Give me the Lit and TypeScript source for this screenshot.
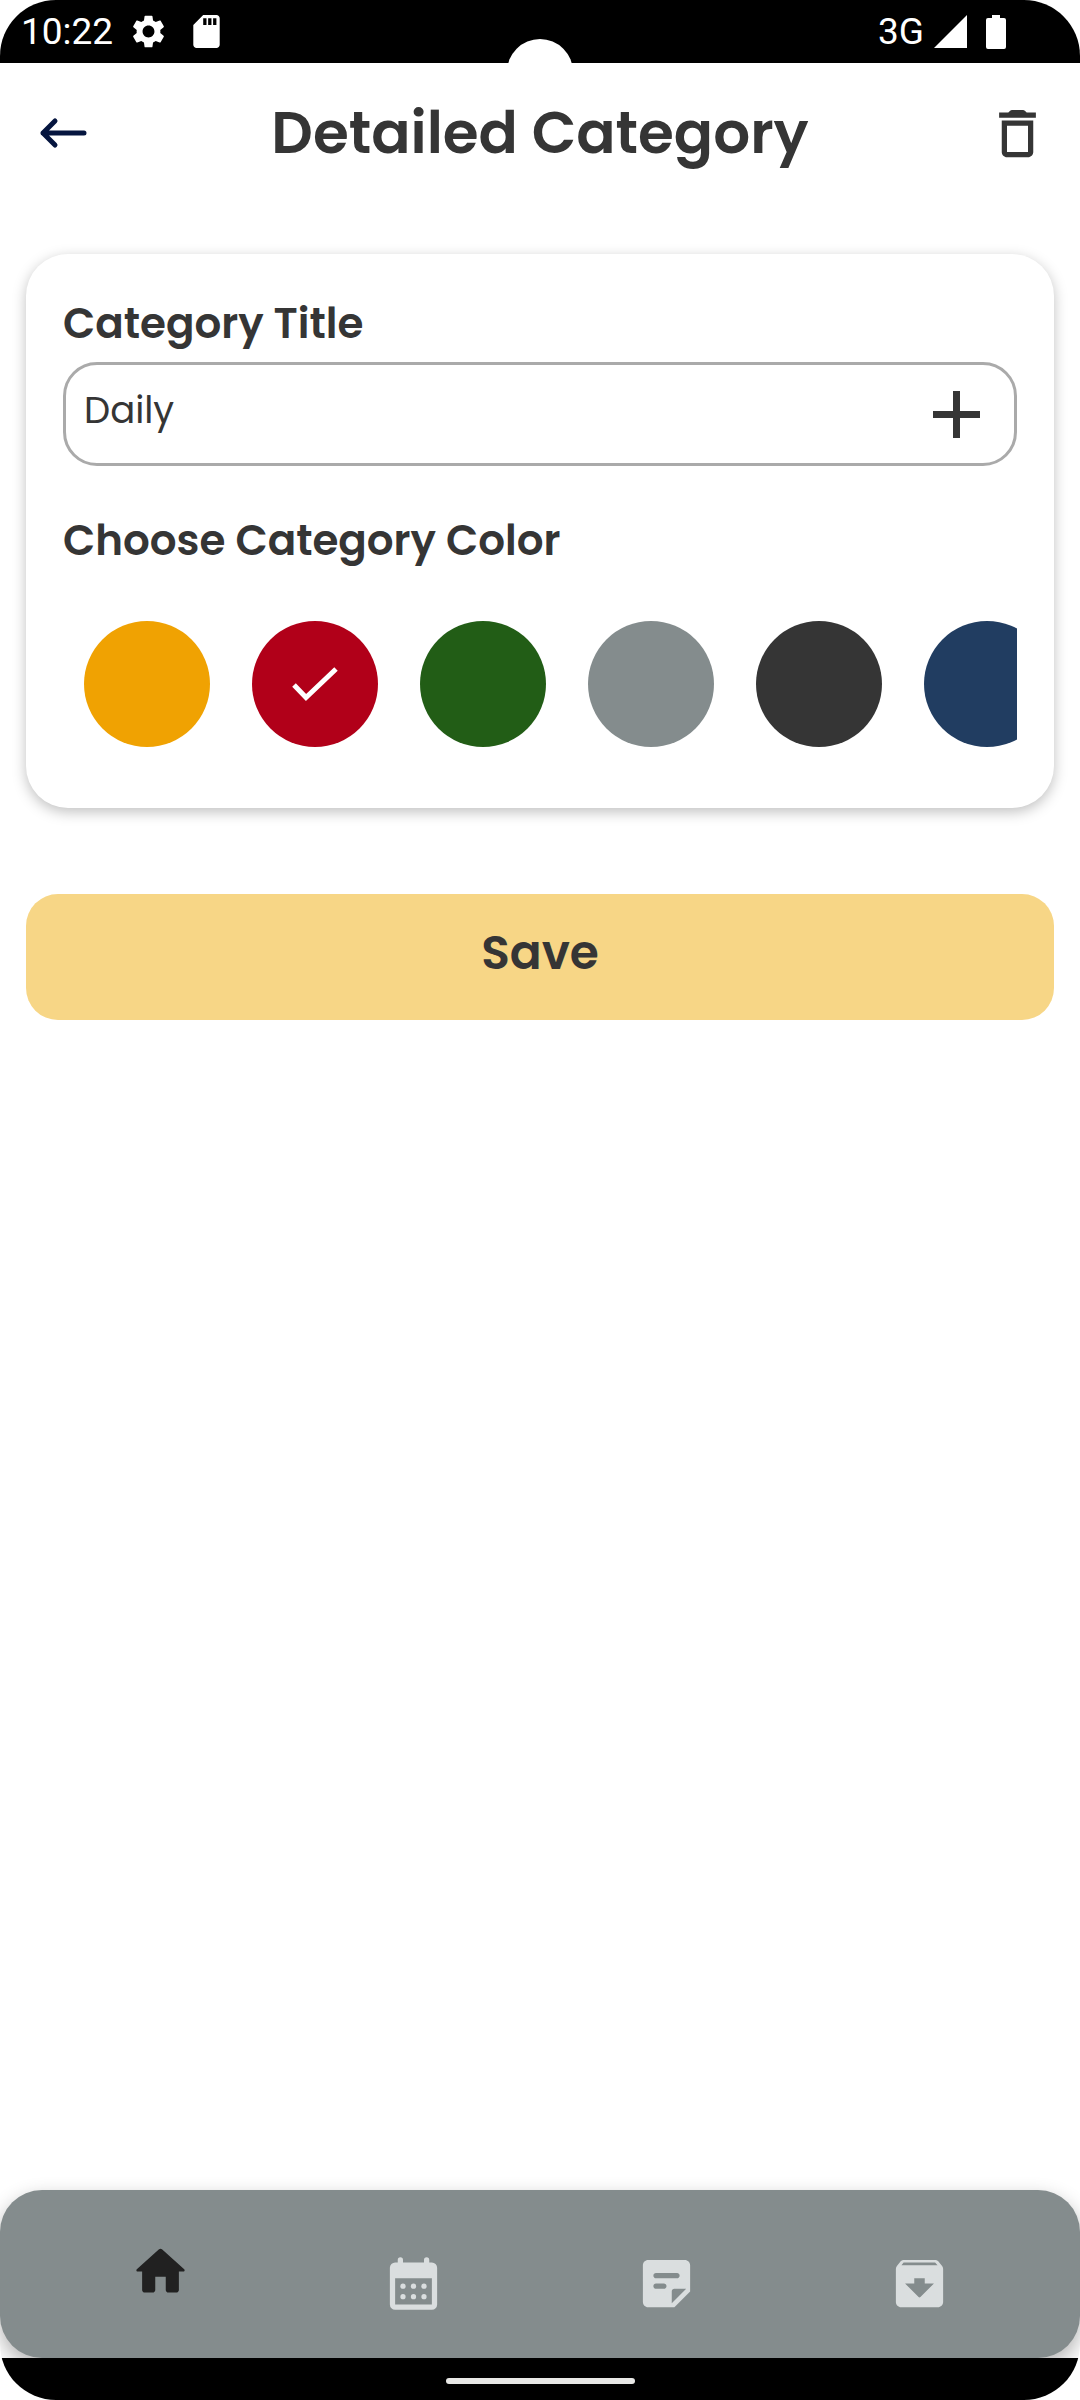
import { LitElement, html, css, svg } from "lit";
import { customElement, state } from "lit/decorators.js";
import { classMap } from "lit/directives/class-map.js";
import { styleMap } from "lit/directives/style-map.js";

interface Swatch {
  name: string;
  color: string;
}

interface Tab {
  name: string;
  icon: unknown;
}

const SWATCHES: Swatch[] = [
  { name: "Orange", color: "#f0a202" },
  { name: "Red", color: "#b10019" },
  { name: "Green", color: "#225d16" },
  { name: "Grey", color: "#848c8d" },
  { name: "Charcoal", color: "#353535" },
  { name: "Navy", color: "#213d61" },
];

const TABS: Tab[] = [
  {
    name: "Home",
    icon: svg`<path d="M10 19v-5h4v5c0 .55.45 1 1 1h3c.55 0 1-.45 1-1v-7h1.7c.46 0 .68-.57.33-.87L12.67 3.6c-.38-.34-.96-.34-1.34 0l-8.36 7.53c-.34.3-.13.87.33.87H5v7c0 .55.45 1 1 1h3c.55 0 1-.45 1-1z"/>`,
  },
  {
    name: "Calendar",
    icon: svg`<path fill-rule="evenodd" d="M6 4V3a1 1 0 0 1 2 0v1h8V3a1 1 0 0 1 2 0v1h1a2 2 0 0 1 2 2v14a2 2 0 0 1-2 2H5a2 2 0 0 1-2-2V6a2 2 0 0 1 2-2zM5 10v10h14V10z"/><circle cx="8" cy="13" r="1"/><circle cx="12" cy="13" r="1"/><circle cx="16" cy="13" r="1"/><circle cx="8" cy="17" r="1"/><circle cx="12" cy="17" r="1"/><circle cx="16" cy="17" r="1"/>`,
  },
  {
    name: "Notes",
    icon: svg`<path d="M19 3H4.99C3.89 3 3 3.9 3 5l.01 14c0 1.1.89 2 1.99 2h10l6-6V5c0-1.1-.9-2-2-2zM8 8h8c.55 0 1 .45 1 1s-.45 1-1 1H8c-.55 0-1-.45-1-1s.45-1 1-1zm3 6H8c-.55 0-1-.45-1-1s.45-1 1-1h3c.55 0 1 .45 1 1s-.45 1-1 1zm3 5.5V15c0-.55.45-1 1-1h4.5L14 19.5z"/>`,
  },
  {
    name: "Archive",
    icon: svg`<path d="M20.54 5.23l-1.39-1.68C18.88 3.21 18.47 3 18 3H6c-.47 0-.88.21-1.16.55L3.46 5.23C3.17 5.57 3 6.02 3 6.5V19c0 1.1.9 2 2 2h14c1.1 0 2-.9 2-2V6.5c0-.48-.17-.93-.46-1.27zm-8.89 11.92L6.5 12H10v-2h4v2h3.5l-5.15 5.15c-.19.19-.51.19-.7 0zM5.12 5l.82-1h12l.93 1H5.12z"/>`,
  },
];

@customElement("status-bar")
export class StatusBar extends LitElement {
  static styles = css`
    :host {
      display: flex;
      justify-content: space-between;
      align-items: center;
      position: relative;
      height: 63px;
      box-sizing: border-box;
      padding: 0 74px 0 21px;
      background: #000;
      color: #fff;
      font: 400 37px/44px Roboto, "Liberation Sans", sans-serif;
    }
    .group {
      display: flex;
      align-items: center;
    }
    .left {
      gap: 19px;
    }
    .right {
      gap: 10px;
    }
    svg {
      display: block;
      fill: #fff;
    }
    .sd,
    .battery {
      margin-left: 9px;
    }
    .camera {
      position: absolute;
      top: 39px;
      left: 50%;
      width: 66px;
      height: 66px;
      margin-left: -33px;
      border-radius: 50%;
      background: #fff;
    }
  `;

  render() {
    return html`
      <div class="group left">
        <span>10:22</span>
        <svg width="33" height="33" viewBox="2 2 20 20" aria-hidden="true">
          <path
            d="M19.14 12.94c.04-.3.06-.61.06-.94 0-.32-.02-.64-.07-.94l2.03-1.58c.18-.14.23-.41.12-.61l-1.92-3.32c-.12-.22-.37-.29-.59-.22l-2.39.96c-.5-.38-1.03-.7-1.62-.94l-.36-2.54c-.04-.24-.24-.41-.48-.41h-3.84c-.24 0-.43.17-.47.41l-.36 2.54c-.59.24-1.13.57-1.62.94l-2.39-.96c-.22-.08-.47 0-.59.22L2.74 8.87c-.12.21-.08.47.12.61l2.03 1.58c-.05.3-.09.63-.09.94s.02.64.07.94l-2.03 1.58c-.18.14-.23.41-.12.61l1.92 3.32c.12.22.37.29.59.22l2.39-.96c.5.38 1.03.7 1.62.94l.36 2.54c.05.24.24.41.48.41h3.84c.24 0 .44-.17.47-.41l.36-2.54c.59-.24 1.13-.56 1.62-.94l2.39.96c.22.08.47 0 .59-.22l1.92-3.32c.12-.22.07-.47-.12-.61l-2.01-1.58zM12 15.6c-1.98 0-3.6-1.62-3.6-3.6s1.62-3.6 3.6-3.6 3.6 1.62 3.6 3.6-1.62 3.6-3.6 3.6z"
          />
        </svg>
        <svg class="sd" width="27" height="33" viewBox="4 2 16 20" aria-hidden="true">
          <path
            d="M18 2h-8L4 8v12c0 1.1.9 2 2 2h12c1.1 0 2-.9 2-2V4c0-1.1-.9-2-2-2zm-6 6h-2V4h2v4zm3 0h-2V4h2v4zm3 0h-2V4h2v4z"
          />
        </svg>
      </div>
      <div class="camera"></div>
      <div class="group right">
        <span>3G</span>
        <svg width="33" height="33" viewBox="0 0 33 33" aria-hidden="true">
          <path d="M0 33 33 0v33z" />
        </svg>
        <svg class="battery" width="20" height="34" viewBox="0 0 20 34" aria-hidden="true">
          <path d="M6 0h8v3h4a2 2 0 0 1 2 2v27a2 2 0 0 1-2 2H2a2 2 0 0 1-2-2V5a2 2 0 0 1 2-2h4z" />
        </svg>
      </div>
    `;
  }
}

@customElement("color-picker")
export class ColorPicker extends LitElement {
  @state() private selected = 1;

  static styles = css`
    :host {
      display: block;
      min-width: 0;
    }
    .row {
      display: flex;
      gap: 42px;
      padding: 0 21px;
      overflow-x: auto;
      scrollbar-width: none;
    }
    .swatch {
      flex: none;
      display: grid;
      place-items: center;
      width: 126px;
      height: 126px;
      border-radius: 50%;
      cursor: pointer;
    }
    .swatch > * {
      grid-area: 1 / 1;
    }
    .radio {
      appearance: none;
      width: 100%;
      height: 100%;
      margin: 0;
      border-radius: 50%;
    }
    .tick {
      fill: none;
      stroke: #fff;
      stroke-width: 5;
      pointer-events: none;
    }
  `;

  render() {
    return html`
      <div class="row" role="radiogroup" aria-label="Choose Category Color">
        ${SWATCHES.map(
          (s, i) => html`
            <label class="swatch" style=${styleMap({ background: s.color })}>
              <input
                class="radio"
                type="radio"
                name="color"
                aria-label=${s.name}
                .checked=${i === this.selected}
                @change=${() => (this.selected = i)}
              />
              ${i === this.selected
                ? html`<svg class="tick" width="48" height="36" viewBox="0 0 48 36" aria-hidden="true">
                    <path d="M3 19 15 31.500 45 3" />
                  </svg>`
                : null}
            </label>
          `
        )}
      </div>
    `;
  }
}

@customElement("tab-bar")
export class TabBar extends LitElement {
  @state() private active = 0;

  static styles = css`
    :host {
      display: block;
    }
    .bar {
      display: flex;
      height: 168px;
      padding: 0 34px;
      border-radius: 42px;
      background: #848c8d;
      box-shadow: 0 8px 20px rgba(0, 0, 0, 0.3);
    }
    .tab {
      flex: 1;
      display: flex;
      align-items: center;
      justify-content: center;
      padding: 18px 0 0;
      border: 0;
      background: none;
      color: #dadedf;
      cursor: pointer;
    }
    .active {
      padding: 0 0 6px;
      color: #212121;
    }
    svg {
      fill: currentColor;
    }
  `;

  render() {
    return html`
      <nav class="bar">
        ${TABS.map(
          (t, i) => html`
            <button
              type="button"
              class=${classMap({ tab: true, active: i === this.active })}
              aria-label=${t.name}
              @click=${() => (this.active = i)}
            >
              <svg width="63" height="63" viewBox="0 0 24 24" aria-hidden="true">${t.icon}</svg>
            </button>
          `
        )}
      </nav>
    `;
  }
}

@customElement("app-root")
export class AppRoot extends LitElement {
  static styles = css`
    :host {
      display: flex;
      flex-direction: column;
      min-height: 100vh;
      overflow: hidden;
      border-radius: 56px;
      background: #fff;
      color: #353535;
      font-family: Poppins, Inter, "Open Sans", sans-serif;
    }
    .header {
      display: grid;
      grid-template-columns: 63px 1fr 63px;
      align-items: center;
      padding: 38px 31px;
    }
    .title {
      margin: 0;
      text-align: center;
      font-size: 58px;
      line-height: 64px;
      font-weight: 600;
    }
    .icon-button {
      display: flex;
      padding: 0;
      border: 0;
      background: none;
      color: inherit;
      cursor: pointer;
    }
    .back {
      padding-left: 8px;
      color: #05153f;
    }
    .back svg {
      fill: none;
      stroke: currentColor;
      stroke-width: 5;
      stroke-linecap: round;
      stroke-linejoin: round;
    }
    .delete svg {
      fill: currentColor;
    }
    .content {
      flex: 1;
      display: flex;
      flex-direction: column;
      gap: 86px;
      padding: 51px 26px;
    }
    .card {
      display: flex;
      flex-direction: column;
      padding: 44px 37px 61px;
      border-radius: 42px;
      background: #fff;
      box-shadow: 0 4px 14px rgba(0, 0, 0, 0.25);
    }
    .label {
      margin: 0;
      font-size: 42px;
      line-height: 52px;
      font-weight: 600;
    }
    .field {
      display: flex;
      align-items: center;
      margin: 12px 0 49px;
      height: 98px;
      padding: 0 34px 0 18px;
      border: 3px solid #aaa;
      border-radius: 34px;
    }
    .input {
      flex: 1;
      min-width: 0;
      padding: 0 0 8px;
      border: 0;
      outline: 0;
      background: none;
      color: inherit;
      font: 400 37px/48px Poppins, Inter, "Open Sans", sans-serif;
    }
    .colors {
      margin-top: 54px;
    }
    .save {
      height: 126px;
      padding: 0 0 8px;
      border: 0;
      border-radius: 32px;
      background: #f7d686;
      color: inherit;
      font: 600 47px/56px Poppins, Inter, "Open Sans", sans-serif;
      cursor: pointer;
    }
    .system {
      position: relative;
      display: flex;
      justify-content: center;
      align-items: center;
      height: 42px;
      padding-top: 4px;
      box-sizing: border-box;
      background: #000;
    }
    .handle {
      width: 189px;
      height: 6px;
      border-radius: 3px;
      background: #e8e8e6;
    }
  `;

  render() {
    return html`
      <status-bar></status-bar>
      <header class="header">
        <button type="button" class="icon-button back" aria-label="Back">
          <svg width="48" height="32" viewBox="0 0 48 32" aria-hidden="true">
            <path d="M45 16H4M16 4 4 16l12 12" />
          </svg>
        </button>
        <h1 class="title">Detailed Category</h1>
        <button type="button" class="icon-button delete" aria-label="Delete">
          <svg width="63" height="63" viewBox="0 0 24 24" aria-hidden="true">
            <path
              d="M6 19c0 1.100.9 2 2 2h8c1.100 0 2-.9 2-2V7H6v12zM8 9h8v10H8V9zm7.500-5l-.7-.7a1 1 0 0 0-.7-.3H9.900a1 1 0 0 0-.7.3L8.500 4H5v2h14V4z"
            />
          </svg>
        </button>
      </header>
      <main class="content">
        <section class="card">
          <label class="label" for="category-title">Category Title</label>
          <div class="field">
            <input class="input" id="category-title" type="text" value="Daily" />
            <button type="button" class="icon-button" aria-label="Add">
              <svg width="47" height="47" viewBox="0 0 47 47" aria-hidden="true">
                <path d="M20 0h7v20h20v7H27v20h-7V27H0v-7h20z" fill="currentColor" />
              </svg>
            </button>
          </div>
          <h2 class="label">Choose Category Color</h2>
          <color-picker class="colors"></color-picker>
        </section>
        <button type="button" class="save">Save</button>
      </main>
      <tab-bar></tab-bar>
      <footer class="system"><div class="handle"></div></footer>
    `;
  }
}
